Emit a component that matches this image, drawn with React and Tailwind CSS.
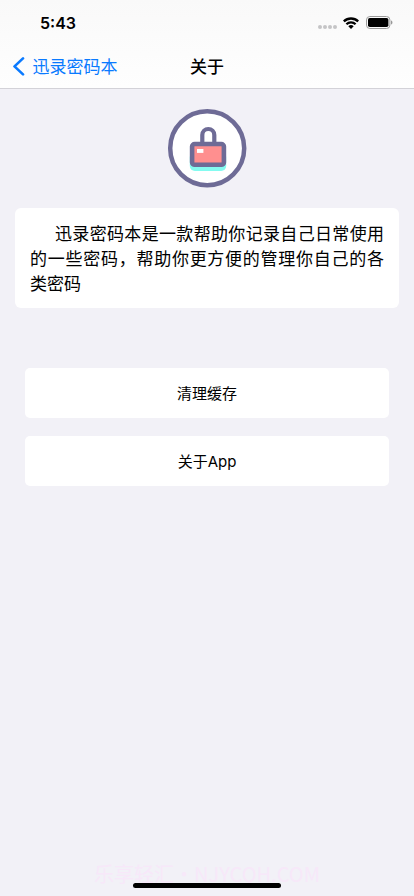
const DESCRIPTION = '迅录密码本是一款帮助你记录自己日常使用的一些密码，帮助你更方便的管理你自己的各类密码';

const ACTIONS = [
  { id: 'clear-cache', label: '清理缓存' },
  { id: 'about-app', label: '关于App' },
];

function StatusBar() {
  return (
    <div className="h-11 pl-10 pr-[21px] flex items-center justify-between">
      <span className="text-[16px] leading-none font-semibold mt-[2px]">5:43</span>
      <div className="flex items-center mt-[1px]">
        <div className="flex gap-[1px] mt-[9px] mr-[6px]">
          {[0, 1, 2, 3].map((i) => (
            <span key={i} className="w-1 h-1 rounded-full bg-[#c4c4c6]" />
          ))}
        </div>
        <svg width="16" height="12" viewBox="0 0 16 12" className="mr-[7px]">
          <g fill="none" stroke="#000" strokeWidth="2.3">
            <path d="M0.8 4.4a10.4 10.4 0 0 1 14.4 0" />
            <path d="M3.4 7.2a6.6 6.6 0 0 1 9.2 0" />
          </g>
          <path d="M5.3 9.3a3.9 3.9 0 0 1 5.4 0L8 12z" />
        </svg>
        <svg width="27" height="13" viewBox="0 0 27 13">
          <rect x="0.5" y="0.5" width="23.4" height="12" rx="3.4" fill="none" stroke="#9a9a9a" />
          <rect x="2" y="2" width="20.4" height="9" rx="1.8" />
          <path d="M25.1 4.5v4c.9-.3 1.3-1.1 1.3-2s-.4-1.7-1.3-2z" fill="#8a8a8a" />
        </svg>
      </div>
    </div>
  );
}

function NavBar() {
  return (
    <div className="h-11 pt-px grid grid-cols-3 items-center">
      <button className="flex items-center pl-3 text-[17px] leading-none text-[#0a7aff] whitespace-nowrap">
        <svg width="13" height="20" viewBox="0 0 13 20" className="mr-[7.5px]">
          <path d="M11 1.4 2.5 9.4l8.5 8" fill="none" stroke="currentColor" strokeWidth="2.6" strokeLinecap="round" strokeLinejoin="round" />
        </svg>
        <span className="mt-px">迅录密码本</span>
      </button>
      <h1 className="mt-px text-center text-[17px] leading-none font-medium">关于</h1>
    </div>
  );
}

function LockLogo() {
  return (
    <svg width="80" height="80" viewBox="0 0 80 80">
      <circle cx="40.2" cy="40.3" r="37" fill="#fff" stroke="#6e6b96" strokeWidth="4.5" />
      <rect x="22.8" y="44" width="36.4" height="19" rx="5" fill="#84fbf0" />
      <path d="M35.3 35v-8a6 6 0 0 1 12 0v8" fill="none" stroke="#6e6b96" strokeWidth="4.2" />
      <rect x="25.1" y="36" width="31.8" height="20.8" rx="2.6" fill="#ff8f8f" stroke="#6e6b96" strokeWidth="4.6" />
      <rect x="30" y="41" width="6.4" height="3.9" fill="#fff" />
    </svg>
  );
}

export default function App() {
  return (
    <div className="w-full h-screen flex flex-col bg-[#f2f1f7] text-black font-[Inter,'Noto_Sans_CJK_SC',sans-serif]">
      <header className="flex-none border-b border-[#d3d2d8] bg-linear-to-b from-[#f9f9f9] to-[#fefefe]">
        <StatusBar />
        <NavBar />
      </header>

      <main className="flex-1 flex flex-col items-center pt-[19px]">
        <LockLogo />
        <section className="w-[384px] h-[100px] mt-5 px-[15px] py-[14px] rounded-md bg-white">
          <p className="text-[17px] leading-[25px] text-justify indent-[25px]">{DESCRIPTION}</p>
        </section>
        <div className="mt-[60px] flex flex-col gap-[18px]">
          {ACTIONS.map((action) => (
            <button key={action.id} className="w-[364px] h-[50px] pt-[2px] rounded-[5px] bg-white text-[15px]">
              {action.label}
            </button>
          ))}
        </div>
      </main>

      <footer className="relative flex-none h-9 flex flex-col items-center">
        <p className="text-[20px] leading-[28px] text-[#f7e8f9] whitespace-nowrap font-['Noto_Sans_CJK_SC',sans-serif]">乐享轻汇・NJYCQH.COM</p>
        <div className="absolute bottom-2 w-[148px] h-[5.5px] rounded-full bg-black" />
      </footer>
    </div>
  );
}
